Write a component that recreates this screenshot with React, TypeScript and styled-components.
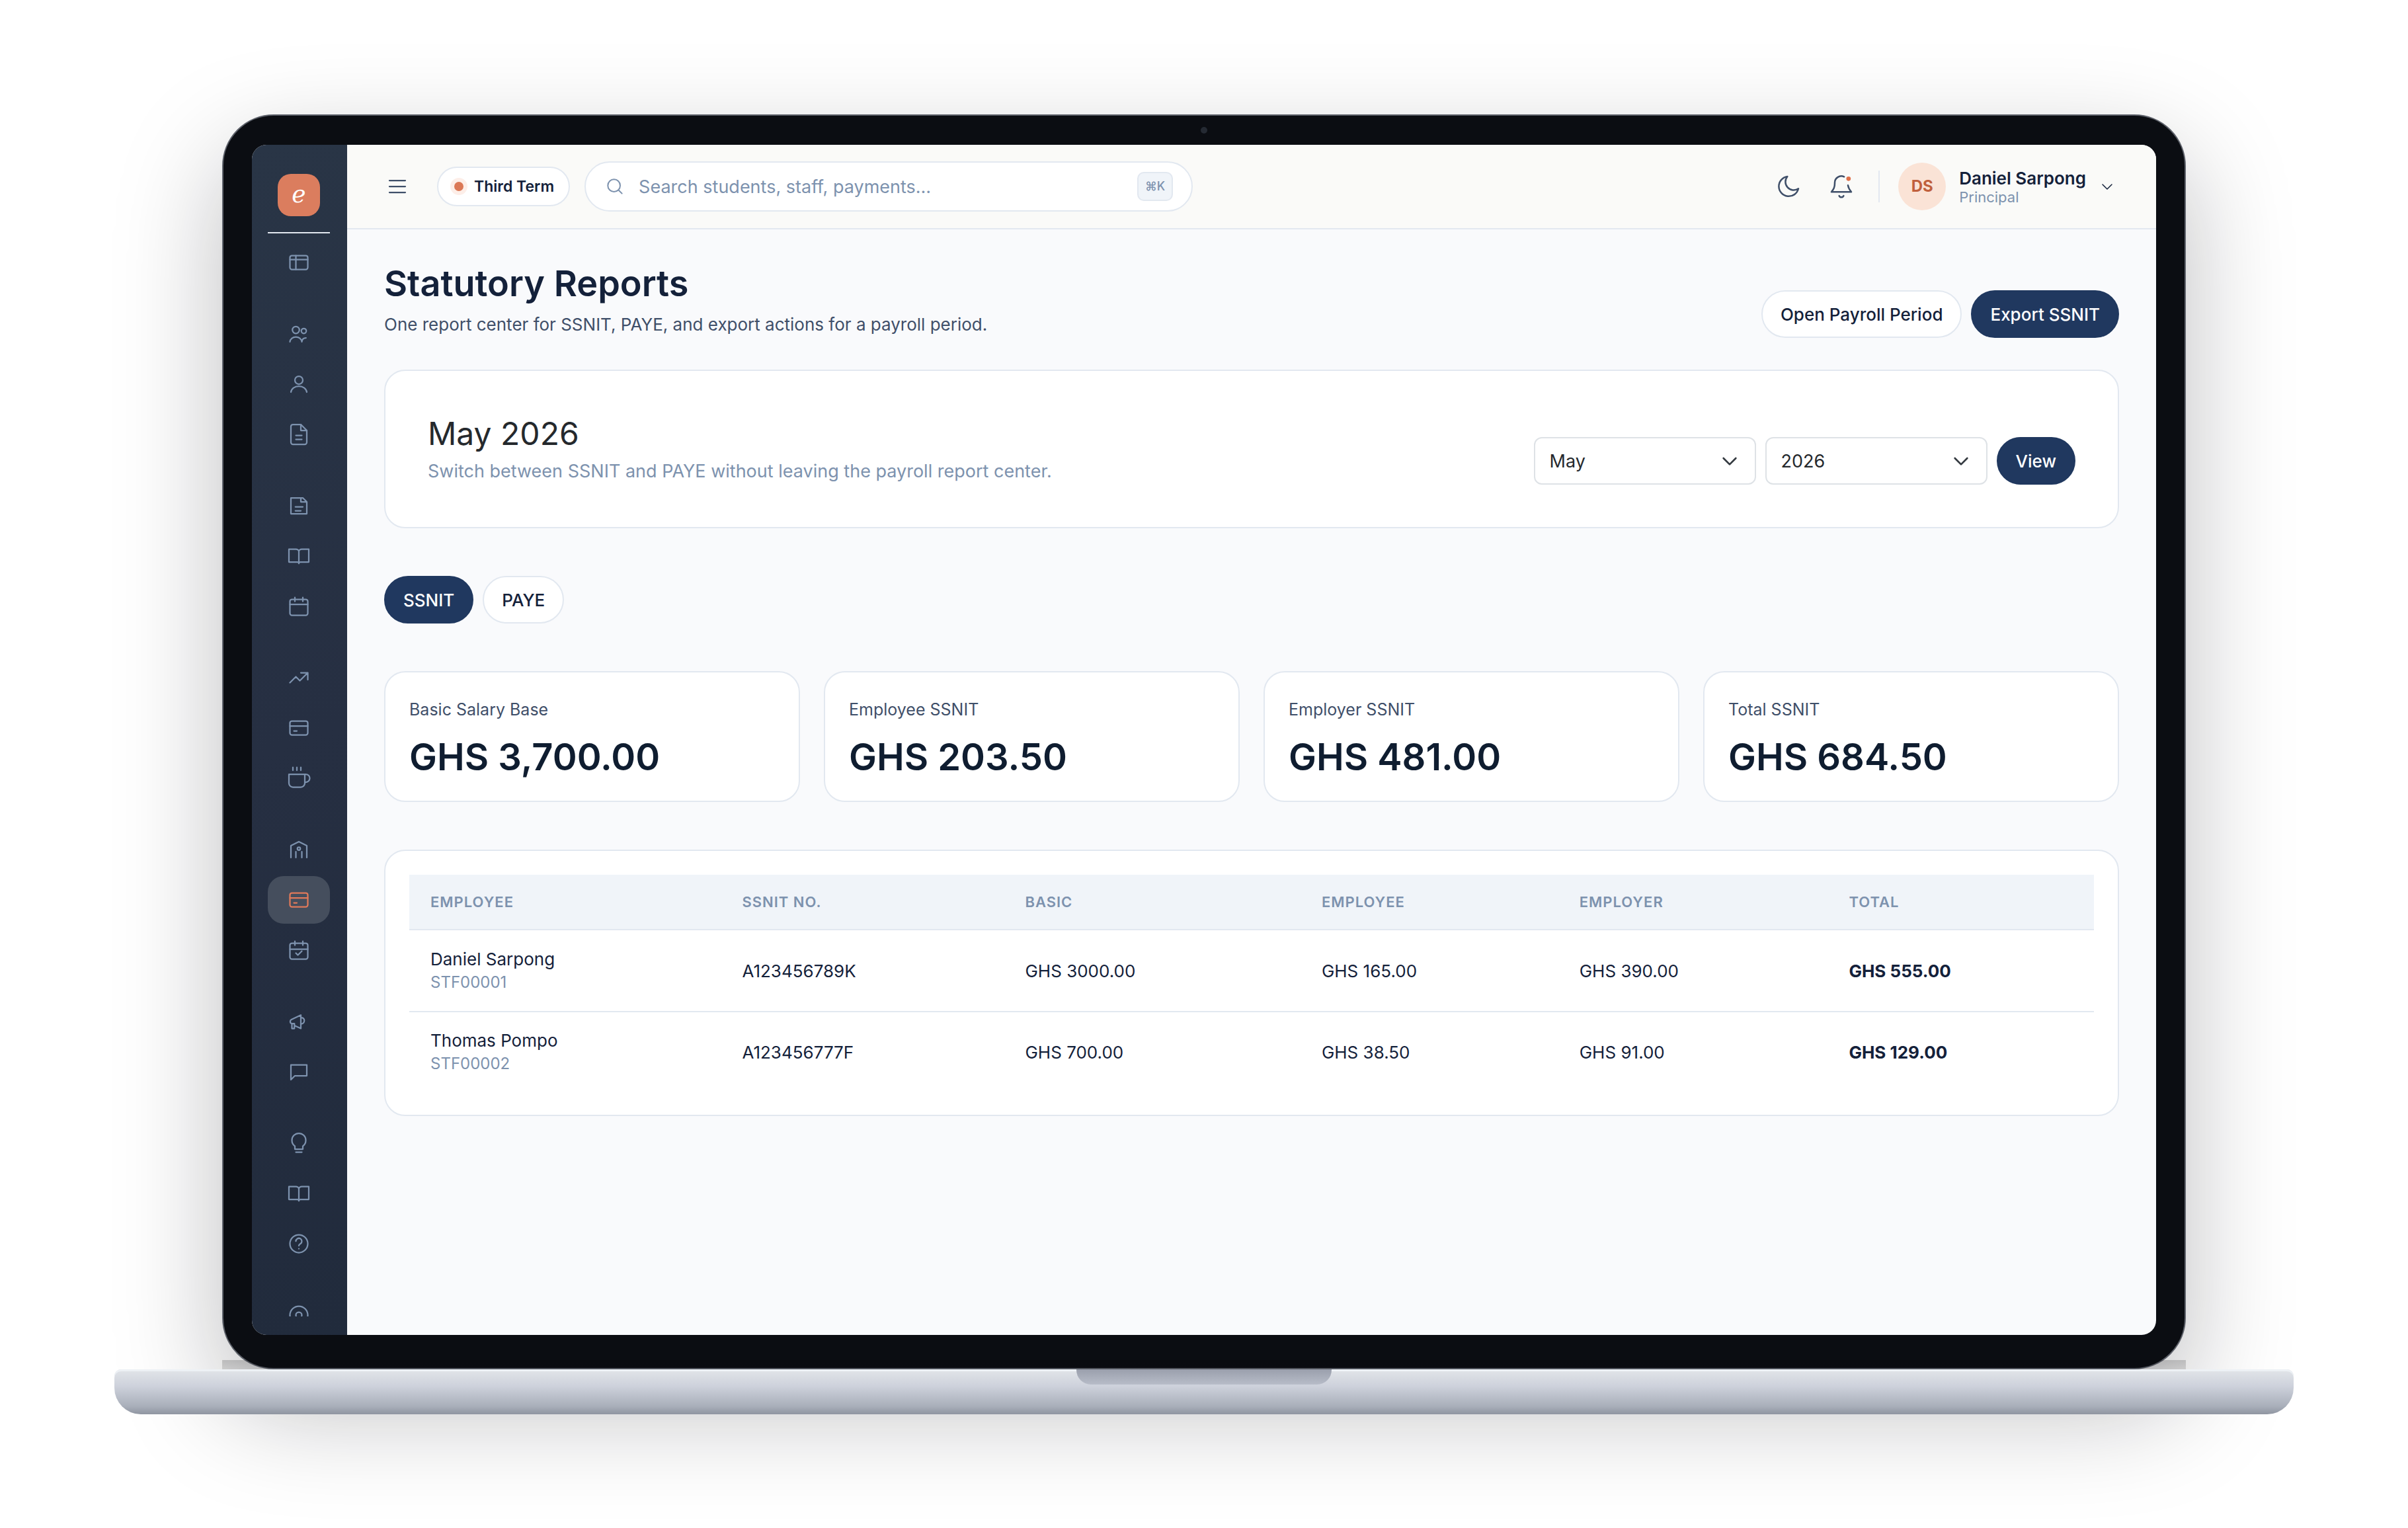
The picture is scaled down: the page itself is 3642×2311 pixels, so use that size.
import React from 'react';
import styled, { createGlobalStyle } from 'styled-components';

const GlobalStyle = createGlobalStyle`
  * {
    box-sizing: border-box;
  }
  body {
    margin: 0;
    background: #fff;
    color: #14213a;
    font-family: Inter, "Liberation Sans", sans-serif;
    font-size: 26px;
  }
  button, input, select {
    font: inherit;
    color: inherit;
  }
  h1, h2, p {
    margin: 0;
  }
`;

/* ---------- laptop ---------- */

const Page = styled.div`
  min-height: 100vh;
  padding: 173px;
`;

const Lid = styled.div`
  position: relative;
  margin: 0 163px;
  padding: 0 43px 50px;
  border: 2px solid #5c6069;
  border-radius: 78px;
  background: #0b0d12;
  box-shadow: 0 60px 160px rgba(10, 12, 20, .27);
`;

const CameraBar = styled.div`
  display: flex;
  align-items: center;
  justify-content: center;
  height: 44px;
`;

const Camera = styled.span`
  width: 10px;
  height: 10px;
  border-radius: 50%;
  background: #252a33;
`;

const Hinge = styled.div`
  position: absolute;
  right: -2px;
  bottom: -2px;
  left: -2px;
  height: 14px;
  background: linear-gradient(rgba(0, 0, 0, .18), rgba(0, 0, 0, .12));
`;

const Base = styled.div`
  position: relative;
  display: flex;
  justify-content: center;
  height: 68px;
  border-radius: 10px 10px 40px 40px;
  background: linear-gradient(#e2e5e9, #cdd1db 38%, #a9afba 82%, #8f95a1);
  box-shadow: inset 0 3px 0 #edf1f5;
`;

const Notch = styled.div`
  width: 386px;
  height: 23px;
  border-radius: 0 0 22px 22px;
  background: linear-gradient(#9a9fac, #b7bcc8);
`;

const Screen = styled.div`
  display: flex;
  aspect-ratio: 16 / 10;
  min-height: 0;
  overflow: hidden;
  border-radius: 22px;
  background: #f9fafc;
`;

/* ---------- sidebar ---------- */

const Sidebar = styled.aside`
  display: flex;
  flex: none;
  flex-direction: column;
  align-items: center;
  width: 144px;
  padding: 44px 26px 28px 24px;
  background: linear-gradient(160deg, #293546, #262f42 50%, #212b3c);
`;

const Logo = styled.div`
  flex: none;
  width: 64px;
  height: 64px;
  margin-bottom: 24px;
  border-radius: 20px;
  background: #db7d5e;
  color: #fff;
  font-family: "DejaVu Serif", "DejaVu Sans", serif;
  font-size: 36px;
  line-height: 62px;
  text-align: center;
`;

const Nav = styled.nav`
  flex: 1;
  align-self: stretch;
  min-height: 0;
  padding-top: 8px;
  overflow: hidden;
  border-top: 2px solid #e2e8f0;
`;

const NavGroup = styled.div`
  display: grid;
  gap: 4px;
  margin-bottom: 36px;
`;

const NavLink = styled.a<{ $active?: boolean }>`
  display: flex;
  align-items: center;
  justify-content: center;
  height: 72px;
  border-radius: 24px;
  color: ${p => (p.$active ? '#e0795a' : '#7d92ae')};
  background: ${p => (p.$active ? '#454e5d' : 'transparent')};
`;

const Icon = styled.svg<{ $size?: number }>`
  flex: none;
  display: block;
  width: ${p => p.$size ?? 36}px;
  height: ${p => p.$size ?? 36}px;
  fill: none;
  stroke: currentColor;
  stroke-width: 1.5;
  stroke-linecap: round;
  stroke-linejoin: round;
`;

/* ---------- top bar ---------- */

const Main = styled.div`
  display: flex;
  flex: 1;
  flex-direction: column;
  min-width: 0;
`;

const TopBar = styled.header`
  display: flex;
  align-items: center;
  flex: none;
  height: 128px;
  padding: 0 56px;
  border-bottom: 2px solid #e2e8f0;
  background: #fafaf8;
`;

const IconButton = styled.button`
  display: flex;
  align-items: center;
  justify-content: center;
  width: 40px;
  height: 40px;
  padding: 0;
  border: 0;
  background: none;
  color: #3f4f69;
`;

const TermButton = styled.button`
  display: flex;
  align-items: center;
  gap: 10px;
  height: 60px;
  margin: 0 22px 0 40px;
  padding: 0 22px 0 18px;
  border: 2px solid #e2e8f0;
  border-radius: 30px;
  background: #fff;
  color: #14213a;
  font-size: 23px;
  font-weight: 600;
  white-space: nowrap;
`;

const Dot = styled.span`
  width: 26px;
  height: 26px;
  border: 6px solid #fdeee8;
  border-radius: 50%;
  background: #db7856;
`;

const SearchBox = styled.label`
  display: flex;
  align-items: center;
  flex: 0 1 920px;
  height: 76px;
  padding: 0 28px;
  border: 2px solid #e2e8f0;
  border-radius: 38px;
  background: #fff;
  color: #7d92ae;

  & input {
    flex: 1;
    min-width: 0;
    padding: 0 20px;
    border: 0;
    outline: 0;
    background: none;
    font-size: 27px;
  }
  & input::placeholder {
    color: #7d92ae;
    opacity: 1;
  }
`;

const Shortcut = styled.kbd`
  padding: 0 10px;
  border: 2px solid #e2e8f0;
  border-radius: 10px;
  background: #f0f4f9;
  font-family: Inter, "DejaVu Sans", sans-serif;
  font-size: 18px;
  font-weight: 500;
  line-height: 40px;
`;

const Actions = styled.div`
  display: flex;
  align-items: center;
  gap: 40px;
  margin-left: auto;
`;

const UserMenu = styled.button`
  display: flex;
  align-items: center;
  gap: 20px;
  margin-left: -4px;
  padding: 0 6px 0 28px;
  border: 0;
  border-left: 2px solid #e2e8f0;
  background: none;
  height: 48px;
  text-align: left;
`;

const Avatar = styled.span`
  flex: none;
  width: 72px;
  border-radius: 50%;
  background: #fae3d6;
  color: #c0603d;
  font-size: 24px;
  font-weight: 700;
  line-height: 72px;
  text-align: center;
`;

const UserText = styled.span`
  display: grid;
  font-weight: 600;
  line-height: 32px;
  white-space: nowrap;

  & small {
    color: #7d92ae;
    font-size: 22px;
    font-weight: 400;
    line-height: 24px;
  }
`;

/* ---------- page content ---------- */

const Content = styled.main`
  display: grid;
  gap: 72px;
  padding: 46px 56px;
`;

const Heading = styled.div`
  display: flex;
  align-items: flex-end;
  justify-content: space-between;
  margin-bottom: -24px;
`;

const Title = styled.h1`
  margin-bottom: 6px;
  font-size: 54px;
  font-weight: 600;
  line-height: 72px;
`;

const Lead = styled.p<{ $muted?: boolean }>`
  color: ${p => (p.$muted ? '#7d92ae' : '#3f4f69')};
  font-size: ${p => (p.$muted ? 27 : 26)}px;
  line-height: 40px;
`;

const ButtonRow = styled.div`
  display: flex;
  gap: 14px;
`;

const Button = styled.button<{ $primary?: boolean }>`
  height: 72px;
  padding: 0 27px;
  border: 2px solid ${p => (p.$primary ? '#20385f' : '#e2e8f0')};
  border-radius: 36px;
  background: ${p => (p.$primary ? '#20385f' : '#fff')};
  color: ${p => (p.$primary ? '#fff' : '#14213a')};
  font-weight: 500;
  white-space: nowrap;
`;

const Card = styled.section`
  border: 2px solid #e2e8f0;
  border-radius: 32px;
  background: #fff;
`;

const PeriodCard = styled(Card)`
  display: flex;
  align-items: flex-end;
  justify-content: space-between;
  padding: 64px;
`;

const PeriodTitle = styled.h2`
  margin-bottom: 6px;
  color: #25292d;
  font-size: 48px;
  font-weight: 400;
  line-height: 62px;
`;

const SelectWrap = styled.label`
  position: relative;
  width: 336px;

  & select {
    width: 100%;
    height: 72px;
    padding: 0 22px;
    border: 2px solid #dee2e6;
    border-radius: 12px;
    appearance: none;
    background: #fff;
    color: #25292d;
    font-size: 27px;
  }
  & svg {
    position: absolute;
    top: 20px;
    right: 24px;
    color: #343a40;
    stroke-width: 2;
    pointer-events: none;
  }
`;

const Stats = styled.div`
  display: grid;
  grid-template-columns: repeat(4, 1fr);
  gap: 36px;
`;

const StatCard = styled(Card)`
  height: 198px;
  padding: 36px;
`;

const StatLabel = styled.p`
  color: #3f4f69;
  font-size: 25px;
  line-height: 40px;
`;

const StatValue = styled.p`
  margin-top: 16px;
  color: #0f1d30;
  font-size: 56px;
  font-weight: 600;
  line-height: 72px;
`;

const TableCard = styled(Card)`
  padding: 36px 36px 34px;
`;

const Table = styled.table`
  width: 100%;
  table-layout: fixed;
  border-collapse: collapse;
  text-align: left;

  & th {
    height: 83px;
    padding: 0 32px;
    border-bottom: 2px solid #e2e8f0;
    background: #f0f4f9;
    color: #7d92ae;
    font-size: 22px;
    font-weight: 600;
    letter-spacing: 1px;
    text-transform: uppercase;
  }
  & td {
    height: 124px;
    padding: 0 32px;
    border-bottom: 2px solid #e2e8f0;
  }
  & td:first-child {
    padding-top: 4px;
  }
  & tr:last-child td {
    height: 122px;
    border-bottom: 0;
  }
  & td:last-child {
    font-weight: 700;
  }
  & small {
    display: block;
    color: #7d92ae;
    font-size: 24px;
    line-height: 40px;
  }
`;

const ICONS: Record<string, React.ReactNode> = {
  dashboard: <><rect x="3" y="5" width="18" height="14" rx="2" /><path d="M3 9h18M9 5v14" /></>,
  users: <><circle cx="9" cy="8" r="3.5" /><circle cx="17" cy="9" r="2.5" /><path d="M3 20c.3-3 3-5 6-5s5.700 2 6 5c.2-2.300 1.700-4 4.200-4" /></>,
  user: <><circle cx="12" cy="8" r="4" /><path d="M4 20c.5-3.500 3.800-6 8-6s7.500 2.500 8 6" /></>,
  file: <><path d="M14 2H6a2 2 0 0 0-2 2v16a2 2 0 0 0 2 2h12a2 2 0 0 0 2-2V8z" /><path d="M14 2v6h6M9 13h6M9 17h6" /></>,
  note: <path d="M4 4h12l4 4v12H4zM14 4v4h6M8.500 13h7.500M8.500 17h5.500" />,
  book: <path d="M12 7.500C12 6 10.500 5 9 5H2v13h8.500c.8 0 1.500.5 1.500 1.500M12 7.500C12 6 13.500 5 15 5h7v13h-8.500c-.8 0-1.500.5-1.500 1.500v-12" />,
  calendar: <><rect x="3" y="5" width="18" height="16" rx="2" /><path d="M3 10h18M8 3v4M16 3v4" /></>,
  trend: <path d="M3 17l6-6 4 4 8-8M14 7h7v7" />,
  card: <><rect x="3" y="5" width="18" height="14" rx="2" /><path d="M3 10h18M7 15h3" /></>,
  coffee: <path d="M18 8h1a4 4 0 0 1 0 8h-1M2 8h16v9a4 4 0 0 1-4 4H6a4 4 0 0 1-4-4zM6 1v3M10 1v3M14 1v3" />,
  hostel: <><path d="M4 20V8l8-4 8 4v12M9 20v-6M15 20v-6" /><circle cx="12" cy="11" r="1.500" /></>,
  schedule: <><rect x="3" y="5" width="18" height="16" rx="2" /><path d="M3 11h18M8 3v4M16 3v4M9 15l2 2 4-4" /></>,
  megaphone: <path d="M14 5.500v13.500L7.500 16M14 5.500L4.500 10c-.8.400-1.200 1-1.200 2s.5 2 1.700 2h2.500v5H5v-5M14 8c2 0 3.500 1 3.500 3s-1.500 3.500-3.500 3.500" />,
  message: <path d="M4 5h16v11H8l-4 4z" />,
  bulb: <path d="M8 18v-3c-2-1.400-3-3.500-3-6a7 7 0 0 1 14 0c0 2.500-1 4.600-3 6v3zM9 21h6" />,
  help: <><circle cx="12" cy="12" r="9" /><path d="M9 9.500a3 3 0 1 1 4.700 2.500c-1 .6-1.700 1-1.700 2M12 17h.01" /></>,
  settings: <><circle cx="12" cy="12" r="9" /><circle cx="12" cy="12" r="3" /></>,
};

const NAV = [
  ['dashboard'],
  ['users', 'user', 'file'],
  ['note', 'book', 'calendar'],
  ['trend', 'card', 'coffee'],
  ['hostel', 'payroll', 'schedule'],
  ['megaphone', 'message'],
  ['bulb', 'book', 'help'],
  ['settings'],
];

const STATS = [
  ['Basic Salary Base', 'GHS 3,700.00'],
  ['Employee SSNIT', 'GHS 203.50'],
  ['Employer SSNIT', 'GHS 481.00'],
  ['Total SSNIT', 'GHS 684.50'],
];

const COLUMNS = [
  ['Employee', '18.5%'],
  ['SSNIT No.', '16.8%'],
  ['Basic', '17.6%'],
  ['Employee', '15.3%'],
  ['Employer', '16%'],
  ['Total', '15.8%'],
];

const ROWS = [
  { name: 'Daniel Sarpong', id: 'STF00001', cells: ['A123456789K', 'GHS 3000.00', 'GHS 165.00', 'GHS 390.00', 'GHS 555.00'] },
  { name: 'Thomas Pompo', id: 'STF00002', cells: ['A123456777F', 'GHS 700.00', 'GHS 38.50', 'GHS 91.00', 'GHS 129.00'] },
];

const Chevron = ({ size }: { size: number }) => (
  <Icon $size={size} viewBox="0 0 24 24" aria-hidden><path d="M5 9l7 7 7-7" /></Icon>
);

const Select = ({ label, value }: { label: string; value: string }) => (
  <SelectWrap>
    <select aria-label={label} defaultValue={value}><option>{value}</option></select>
    <Chevron size={32} />
  </SelectWrap>
);

const SideNav = () => (
  <Sidebar>
    <Logo>ℯ</Logo>
    <Nav>
      {NAV.map((group, i) => (
        <NavGroup key={i}>
          {group.map(name => (
            <NavLink key={name} href="#" aria-label={name} $active={name === 'payroll'}>
              <Icon viewBox="0 0 24 24">{ICONS[name === 'payroll' ? 'card' : name]}</Icon>
            </NavLink>
          ))}
        </NavGroup>
      ))}
    </Nav>
  </Sidebar>
);

const Header = () => (
  <TopBar>
    <IconButton aria-label="Menu">
      <Icon viewBox="0 0 24 24"><path d="M4 6h16M4 12h16M4 18h16" /></Icon>
    </IconButton>
    <TermButton><Dot />Third Term</TermButton>
    <SearchBox>
      <Icon $size={32} viewBox="0 0 24 24"><circle cx="11" cy="11" r="7" /><path d="M16.500 16.500L20 20" /></Icon>
      <input aria-label="Search" placeholder="Search students, staff, payments…" />
      <Shortcut>⌘K</Shortcut>
    </SearchBox>
    <Actions>
      <IconButton aria-label="Dark mode">
        <Icon $size={40} viewBox="0 0 24 24"><path d="M21 14A9 9 0 1 1 11 3a7.500 7.500 0 0 0 10 11z" /></Icon>
      </IconButton>
      <IconButton aria-label="Notifications">
        <Icon $size={40} viewBox="0 0 24 24">
          <path d="M14.500 3.200A6 6 0 0 0 6 9c0 4-1 5.500-3 8h18c-1.500-1.800-2.600-3.500-3-6M10 20.500a2.200 2.200 0 0 0 4 0" />
          <circle cx="18.500" cy="5" r="2" fill="#e0704a" stroke="none" />
        </Icon>
      </IconButton>
      <UserMenu>
        <Avatar>DS</Avatar>
        <UserText>Daniel Sarpong<small>Principal</small></UserText>
        <Chevron size={24} />
      </UserMenu>
    </Actions>
  </TopBar>
);

const ReportTable = () => (
  <Table>
    <thead>
      <tr>{COLUMNS.map(([name, width], i) => <th key={i} style={{ width }}>{name}</th>)}</tr>
    </thead>
    <tbody>
      {ROWS.map(row => (
        <tr key={row.id}>
          <td>{row.name}<small>{row.id}</small></td>
          {row.cells.map(cell => <td key={cell}>{cell}</td>)}
        </tr>
      ))}
    </tbody>
  </Table>
);

export default function App() {
  return <>
    <GlobalStyle />
    <Page>
      <Lid>
        <CameraBar><Camera /></CameraBar>
        <Screen>
          <SideNav />
          <Main>
            <Header />
            <Content>
              <Heading>
                <div>
                  <Title>Statutory Reports</Title>
                  <Lead>One report center for SSNIT, PAYE, and export actions for a payroll period.</Lead>
                </div>
                <ButtonRow>
                  <Button>Open Payroll Period</Button>
                  <Button $primary>Export SSNIT</Button>
                </ButtonRow>
              </Heading>
              <PeriodCard>
                <div>
                  <PeriodTitle>May 2026</PeriodTitle>
                  <Lead $muted>Switch between SSNIT and PAYE without leaving the payroll report center.</Lead>
                </div>
                <ButtonRow>
                  <Select label="Month" value="May" />
                  <Select label="Year" value="2026" />
                  <Button $primary>View</Button>
                </ButtonRow>
              </PeriodCard>
              <ButtonRow>
                <Button $primary>SSNIT</Button>
                <Button>PAYE</Button>
              </ButtonRow>
              <Stats>
                {STATS.map(([label, value]) => (
                  <StatCard key={label}>
                    <StatLabel>{label}</StatLabel>
                    <StatValue>{value}</StatValue>
                  </StatCard>
                ))}
              </Stats>
              <TableCard><ReportTable /></TableCard>
            </Content>
          </Main>
        </Screen>
        <Hinge />
      </Lid>
      <Base><Notch /></Base>
    </Page>
  </>;
}
